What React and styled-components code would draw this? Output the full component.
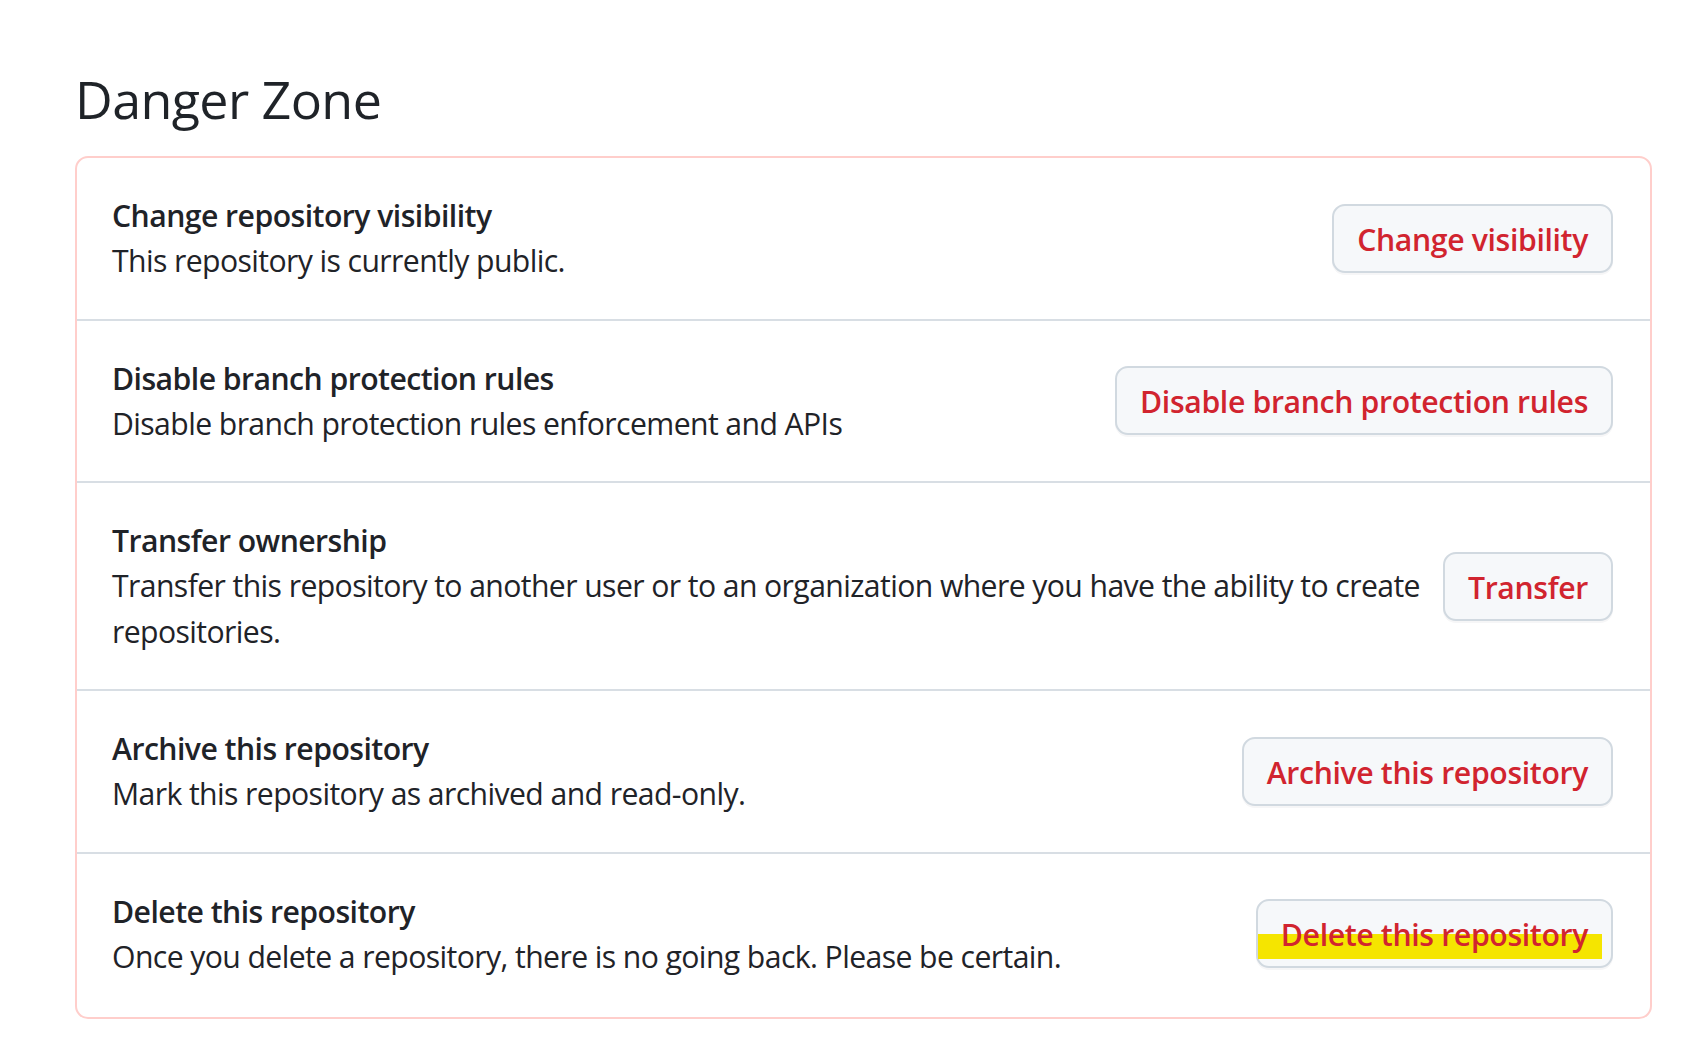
import React from "react";
import styled, { createGlobalStyle } from "styled-components";

const Global = createGlobalStyle`
  html, body { margin: 0; padding: 0; background: #ffffff; }
  body {
    font-family: "Open Sans", "Noto Sans", "Liberation Sans", sans-serif;
    color: #1f2328;
  }
  * { box-sizing: border-box; }
`;

const Page = styled.main`
  padding: 66px 36px 0 75px;
`;

const Heading = styled.h2`
  margin: 0 0 25px 0;
  font-size: 52px;
  line-height: 65px;
  font-weight: 400;
  color: #1f2328;
  letter-spacing: -0.6px;
`;

const Card = styled.section`
  border: 2px solid #ffcecb;
  border-radius: 13px;
  display: flex;
  flex-direction: column;
`;

const Row = styled.div`
  display: flex;
  align-items: center;
  gap: 10px;
  padding: 35px 37px 35px 35px;
  & + & {
    border-top: 2px solid #d8dee4;
  }
  &:last-child {
    padding-bottom: 38px;
  }
`;

const Info = styled.div`
  flex: 1 1 auto;
  min-width: 0;
  font-size: 30.2px;
  line-height: 45.3px;
`;

const Title = styled.strong`
  display: block;
  font-weight: 600;
  letter-spacing: -0.55px;
  color: #1f2328;
`;

const Desc = styled.p`
  margin: 0;
  font-weight: 400;
  letter-spacing: -0.6px;
  color: #1f2328;
`;

const Button = styled.button`
  position: relative;
  flex: 0 0 auto;
  height: 69px;
  padding: 3px 23px 0;
  border: 2px solid #d1d9e0;
  border-radius: 13px;
  background: #f6f8fa;
  box-shadow: 0 2px 0 rgba(31, 35, 40, 0.04);
  color: #d1242f;
  font-family: inherit;
  font-size: 30.2px;
  font-weight: 600;
  letter-spacing: -0.35px;
  line-height: 1;
  white-space: nowrap;
  cursor: pointer;
`;

const Label = styled.span`
  position: relative;
  z-index: 1;
`;

const Highlight = styled.span`
  position: absolute;
  left: 0;
  right: 9px;
  top: 33px;
  height: 25px;
  background: #f5e500;
  z-index: 0;
`;

const items = [
  {
    title: "Change repository visibility",
    desc: "This repository is currently public.",
    action: "Change visibility",
  },
  {
    title: "Disable branch protection rules",
    desc: "Disable branch protection rules enforcement and APIs",
    action: "Disable branch protection rules",
  },
  {
    title: "Transfer ownership",
    desc: "Transfer this repository to another user or to an organization where you have the ability to create repositories.",
    action: "Transfer",
  },
  {
    title: "Archive this repository",
    desc: "Mark this repository as archived and read-only.",
    action: "Archive this repository",
  },
  {
    title: "Delete this repository",
    desc: "Once you delete a repository, there is no going back. Please be certain.",
    action: "Delete this repository",
    highlighted: true,
  },
];

export default function App() {
  return (
    <>
      <Global />
      <Page>
        <Heading>Danger Zone</Heading>
        <Card>
          {items.map((it) => (
            <Row key={it.title}>
              <Info>
                <Title>{it.title}</Title>
                <Desc>{it.desc}</Desc>
              </Info>
              <Button type="button">
                {it.highlighted && <Highlight />}
                <Label>{it.action}</Label>
              </Button>
            </Row>
          ))}
        </Card>
      </Page>
    </>
  );
}
